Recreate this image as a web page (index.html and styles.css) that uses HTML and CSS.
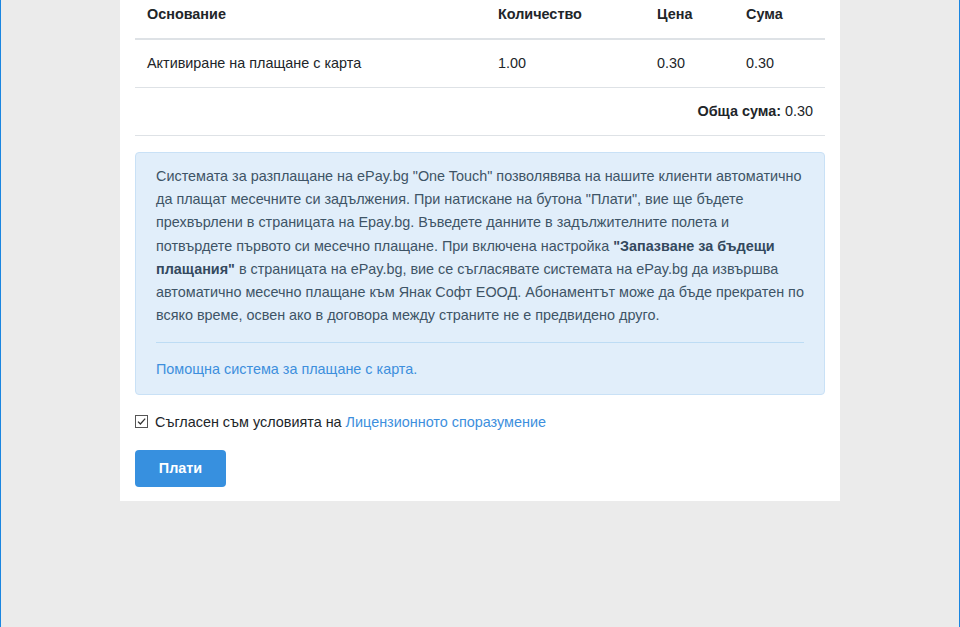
FILE: index.html
```html
<!DOCTYPE html>
<html lang="bg">
<head>
<meta charset="utf-8">
<title>Плащане</title>
<link rel="stylesheet" href="styles.css">
</head>
<body>
<div class="page">
  <div class="card">
    <table class="items">
      <thead>
        <tr>
          <th class="c1">Основание</th>
          <th class="c2">Количество</th>
          <th class="c3">Цена</th>
          <th class="c4">Сума</th>
        </tr>
      </thead>
      <tbody>
        <tr>
          <td>Активиране на плащане с карта</td>
          <td>1.00</td>
          <td>0.30</td>
          <td>0.30</td>
        </tr>
        <tr>
          <td colspan="4" class="total"><strong>Обща сума:</strong> 0.30</td>
        </tr>
      </tbody>
    </table>

    <div class="info">
      <p>Системата за разплащане на ePay.bg "One Touch" позволявява на нашите клиенти автоматично да плащат месечните си задължения. При натискане на бутона "Плати", вие ще бъдете прехвърлени в страницата на Epay.bg. Въведете данните в задължителните полета и потвърдете първото си месечно плащане. При включена настройка <strong>"Запазване за бъдещи плащания"</strong> в страницата на ePay.bg, вие се съгласявате системата на ePay.bg да извършва автоматично месечно плащане към Янак Софт ЕООД. Абонаментът може да бъде прекратен по всяко време, освен ако в договора между страните не е предвидено друго.</p>
      <hr class="sep">
      <a class="help" href="#">Помощна система за плащане с карта.</a>
    </div>

    <label class="agree">
      <span class="box"><svg width="13" height="13" viewBox="0 0 13 13"><rect x="0.5" y="0.5" width="12" height="12" fill="#fff" stroke="#555"/><path d="M3 6.6 L5.4 9 L10.2 3.6" fill="none" stroke="#333" stroke-width="1.3"/></svg></span>
      <span>Съгласен съм условията на <a href="#">Лицензионното споразумение</a></span>
    </label>

    <button class="pay" type="button">Плати</button>
  </div>
</div>
</body>
</html>
```

FILE: styles.css
```css
html, body {
  margin: 0;
  padding: 0;
}
body {
  font-family: "Liberation Sans", Arial, sans-serif;
  color: #212529;
  background: #ebebeb;
}
.page {
  min-height: 627px;
  box-sizing: border-box;
  border-left: 1px solid #1a85e0;
  border-right: 1px solid #1a85e0;
  background: #ebebeb;
}
.card {
  width: 720px;
  margin: 0 auto;
  background: #fff;
  padding: 0 15px 14px;
  box-sizing: border-box;
}
.items {
  width: 690px;
  border-collapse: collapse;
  font-size: 14.4px;
  line-height: 23px;
}
.items th {
  text-align: left;
  font-weight: bold;
  padding: 3px 12px 12px;
  border-bottom: 2px solid #dee2e6;
}
.items td {
  padding: 12px;
  border-bottom: 1px solid #dee2e6;
}
.c1 { width: 327px; }
.c2 { width: 135px; }
.c3 { width: 65px; }
.c4 { width: auto; }
.items td.total {
  text-align: right;
}
.info {
  margin-top: 16px;
  background: #e1eefa;
  border: 1px solid #c9e1f6;
  border-radius: 4px;
  padding: 12px 20px 12px;
  color: #3e5466;
  font-size: 14.4px;
  line-height: 23.2px;
}
.info p {
  margin: 0;
}
.info strong {
  color: #34495e;
}
.sep {
  border: 0;
  border-top: 1px solid #bddcf4;
  margin: 15px 0 15px;
}
.help {
  color: #3d8fdd;
  text-decoration: none;
}
.agree {
  display: flex;
  align-items: center;
  gap: 7px;
  margin-top: 17px;
  font-size: 14.4px;
  line-height: 20px;
  color: #212529;
}
.box {
  display: flex;
  width: 13px;
  height: 13px;
}
.agree a {
  color: #3d8fdd;
  text-decoration: none;
}
.pay {
  display: block;
  margin-top: 18px;
  width: 91px;
  height: 37px;
  border: 0;
  border-radius: 4px;
  background: #3790df;
  color: #fff;
  font-family: "Liberation Sans", Arial, sans-serif;
  font-size: 14.4px;
  font-weight: bold;
  padding: 0;
}
```
